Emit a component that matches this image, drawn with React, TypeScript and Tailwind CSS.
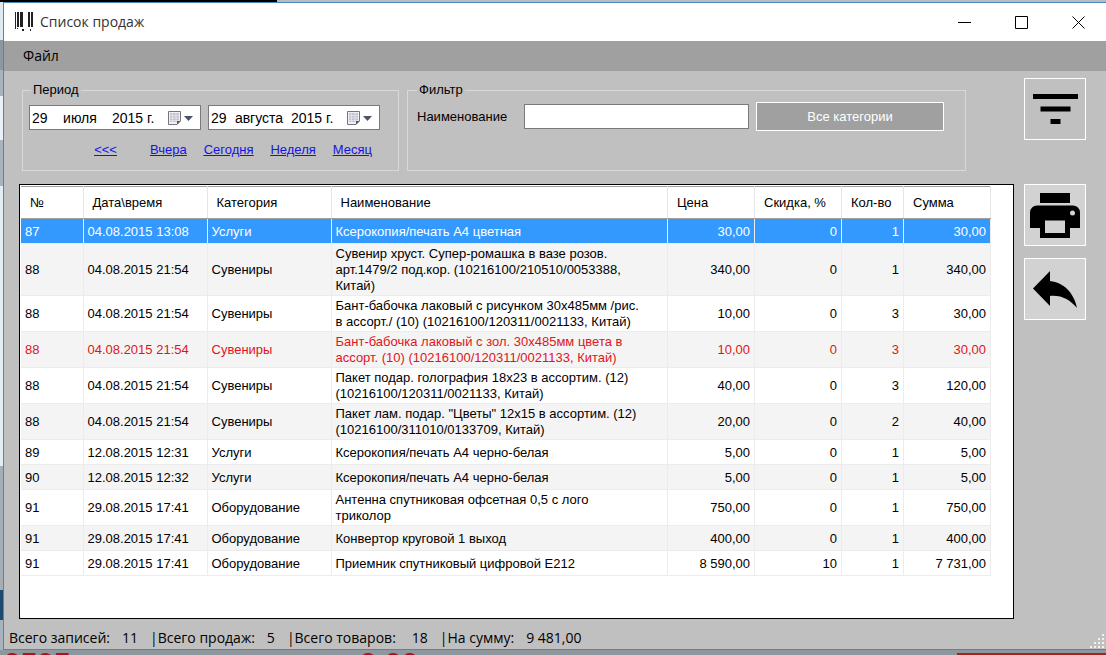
import { ReactNode } from "react";
import clsx from "clsx";

type Sale = {
  id: number;
  date: string;
  category: string;
  name: string;
  price: string;
  discount: number;
  count: number;
  total: string;
  state?: "selected" | "returned";
};

const sales: Sale[] = [
  { id: 87, date: "04.08.2015 13:08", category: "Услуги", name: "Ксерокопия/печать А4 цветная", price: "30,00", discount: 0, count: 1, total: "30,00", state: "selected" },
  { id: 88, date: "04.08.2015 21:54", category: "Сувениры", name: "Сувенир хруст. Супер-ромашка в вазе розов.\nарт.1479/2 под.кор. (10216100/210510/0053388,\nКитай)", price: "340,00", discount: 0, count: 1, total: "340,00" },
  { id: 88, date: "04.08.2015 21:54", category: "Сувениры", name: "Бант-бабочка лаковый с рисунком 30х485мм /рис.\nв ассорт./ (10) (10216100/120311/0021133, Китай)", price: "10,00", discount: 0, count: 3, total: "30,00" },
  { id: 88, date: "04.08.2015 21:54", category: "Сувениры", name: "Бант-бабочка лаковый с зол. 30х485мм цвета в\nассорт. (10) (10216100/120311/0021133, Китай)", price: "10,00", discount: 0, count: 3, total: "30,00", state: "returned" },
  { id: 88, date: "04.08.2015 21:54", category: "Сувениры", name: "Пакет подар. голография 18х23 в ассортим. (12)\n(10216100/120311/0021133, Китай)", price: "40,00", discount: 0, count: 3, total: "120,00" },
  { id: 88, date: "04.08.2015 21:54", category: "Сувениры", name: "Пакет лам. подар. \"Цветы\" 12х15 в ассортим. (12)\n(10216100/311010/0133709, Китай)", price: "20,00", discount: 0, count: 2, total: "40,00" },
  { id: 89, date: "12.08.2015 12:31", category: "Услуги", name: "Ксерокопия/печать А4 черно-белая", price: "5,00", discount: 0, count: 1, total: "5,00" },
  { id: 90, date: "12.08.2015 12:32", category: "Услуги", name: "Ксерокопия/печать А4 черно-белая", price: "5,00", discount: 0, count: 1, total: "5,00" },
  { id: 91, date: "29.08.2015 17:41", category: "Оборудование", name: "Антенна спутниковая офсетная 0,5 с лого\nтриколор", price: "750,00", discount: 0, count: 1, total: "750,00" },
  { id: 91, date: "29.08.2015 17:41", category: "Оборудование", name: "Конвертор круговой 1 выход", price: "400,00", discount: 0, count: 1, total: "400,00" },
  { id: 91, date: "29.08.2015 17:41", category: "Оборудование", name: "Приемник спутниковый цифровой Е212", price: "8 590,00", discount: 10, count: 1, total: "7 731,00" },
];

const columns = [
  { title: "№", width: "w-[62px]" },
  { title: "Дата\\время", width: "w-[124px]" },
  { title: "Категория", width: "w-[124px]" },
  { title: "Наименование", width: "" },
  { title: "Цена", width: "w-[87px]" },
  { title: "Скидка, %", width: "w-[87px]" },
  { title: "Кол-во", width: "w-[62px]" },
  { title: "Сумма", width: "w-[87px]" },
];

function BarcodeIcon() {
  return (
    <svg width="18" height="20" viewBox="0 0 18 20" fill="#222" shapeRendering="crispEdges" aria-hidden="true">
      <rect x="0" y="0" width="1" height="17" />
      <rect x="2" y="0" width="2" height="15" />
      <rect x="5" y="0" width="3" height="15" />
      <rect x="13" y="0" width="2" height="15" />
      <rect x="16" y="0" width="2" height="15" />
      <rect x="7" y="17" width="2" height="2" />
      <rect x="2" y="16" width="1" height="1" />
      <rect x="15" y="17" width="1" height="2" />
    </svg>
  );
}

function CalendarIcon() {
  return (
    <svg width="26" height="16" viewBox="0 0 26 16" aria-hidden="true">
      <path d="M1.5 1.5h12v9.500l-3.500 3.500h-8.500z" fill="#f1f1f4" stroke="#77747b" />
      <path d="M3 3h9v9H3z" fill="#c3c3d2" />
      <path d="M3 5.500h9M3 8h9M3 10.500h9M5.500 3v9M9 3v9" stroke="#e9e9ef" strokeWidth="0.7" />
      <path d="M10 14.500v-3.500h3.500z" fill="#555" />
      <path d="M17 6h9l-4.500 5z" fill="#4a5468" />
    </svg>
  );
}

function DateField({ label, day, month, year }: { label: string; day: string; month: string; year: string }) {
  return (
    <button
      aria-label={label}
      className="flex h-[25px] w-[172px] items-center border border-[#7a7a7a] bg-white pl-[2px] pr-[7px] text-left text-sm">
      <span className="w-4">{day}</span>
      <span className="flex-1 text-center">{month}</span>
      <span className="w-[55px] whitespace-nowrap">{year}</span>
      <CalendarIcon />
    </button>
  );
}

function SideButton({ label, className, children }: { label: string; className?: string; children: ReactNode }) {
  return (
    <button
      aria-label={label}
      className={clsx("flex size-[62px] items-center justify-center border border-white", className)}>
      {children}
    </button>
  );
}

function TitleBar() {
  return (
    <header className="flex h-[38px] items-center bg-white pl-[11px] pr-[21px]">
      <BarcodeIcon />
      <h1 className="ml-[7px] flex-1 font-['Open_Sans','Noto_Sans',sans-serif] text-sm text-[#333]">Список продаж</h1>
      <div className="flex gap-[44px]">
        <button aria-label="Свернуть">
          <svg width="13" height="13" viewBox="0 0 13 13" stroke="#000"><path d="M0 6.500h13" /></svg>
        </button>
        <button aria-label="Развернуть">
          <svg width="13" height="13" viewBox="0 0 13 13" stroke="#000" fill="none"><path d="M.5.5h12v12H.5z" /></svg>
        </button>
        <button aria-label="Закрыть">
          <svg width="13" height="13" viewBox="0 0 13 13" stroke="#000"><path d="M.5.5l12 12M12.500.5l-12 12" /></svg>
        </button>
      </div>
    </header>
  );
}

function SalesTable() {
  return (
    <div className="min-w-0 flex-1 border border-black bg-white pl-px pr-[22px] pt-px">
      <table className="w-full table-fixed border-collapse leading-4">
        <colgroup>
          {columns.map((column) => (
            <col key={column.title} className={column.width} />
          ))}
        </colgroup>
        <thead>
          <tr className="h-8">
            {columns.map((column) => (
              <th
                key={column.title}
                className="whitespace-nowrap border-r border-t border-b border-[#e5e5e5] border-t-[#a0a0a0] border-b-[#a0a0a0] pl-[9px] text-left font-normal">
                {column.title}
              </th>
            ))}
          </tr>
        </thead>
        <tbody>
          {sales.map((sale, i) => (
            <tr
              key={i}
              className={clsx(
                "h-[25px] [&>td]:border-r [&>td]:border-b [&>td]:border-[#ececec] [&>td]:px-1 [&>td]:pt-[2px] [&>td]:pb-px",
                sale.state === "selected" ? "bg-[#3399ff] text-white" : i % 2 ? "bg-[#f4f4f4]" : "bg-white",
                sale.state === "returned" && "text-[#e0141c]"
              )}>
              <td>{sale.id}</td>
              <td className="whitespace-nowrap">{sale.date}</td>
              <td>{sale.category}</td>
              <td className="whitespace-pre-line">{sale.name}</td>
              <td className="text-right">{sale.price}</td>
              <td className="text-right">{sale.discount}</td>
              <td className="text-right">{sale.count}</td>
              <td className="text-right">{sale.total}</td>
            </tr>
          ))}
        </tbody>
      </table>
    </div>
  );
}

export default function App() {
  return (
    <div className="flex min-h-screen flex-col bg-[#8e979e] font-['Liberation_Sans',sans-serif] text-[13px] text-black">
      {/* Strip of the desktop above the window */}
      <div className="flex h-[2px] bg-[#b4bcc8]">
        <div className="w-1/4 bg-black" />
      </div>

      <div className="flex flex-1">
        {/* Edge of the window behind */}
        <div className="flex w-[3px] flex-col">
          <div className="h-[38px] bg-[#dfe9f0]" />
          <div className="h-[30px] bg-[#8d979f]" />
          <div className="h-[26px] bg-[#a9b3bd]" />
          <div className="h-[44px] bg-[#e9f2f8]" />
          <div className="h-[46px] bg-[#a9b3bd]" />
          <div className="h-[280px] bg-[#e3edf4]" />
          <div className="flex-1 bg-[#a4afb8]" />
          <div className="h-[30px] bg-[#1f4a70]" />
          <div className="h-[30px] bg-[#a9b3bd]" />
        </div>
        <main className="flex min-w-0 flex-1 flex-col border-y border-l border-[#4a88b8] bg-[#c0c0c0]">
          <TitleBar />
          <nav className="flex h-[30px] items-center bg-[#a0a0a0] pl-[19px]">
            <button className="font-['Open_Sans','Noto_Sans',sans-serif] text-sm">Файл</button>
          </nav>

          <div className="flex flex-1 gap-[10px] pl-[15px] pr-5 pt-[7px]">
            <div className="flex min-w-0 flex-1 flex-col">
              <div className="flex gap-[8px] pl-[3px] pr-[48px]">
                <fieldset className="h-[93px] w-[377px] shrink-0 border border-[#d8d8d8] px-[6px]">
                  <legend className="ml-[2px] px-[2px] leading-[24px]">Период</legend>
                  <div className="flex gap-[7px] pt-[3px]">
                    <DateField label="Начало периода" day="29" month="июля" year="2015 г." />
                    <DateField label="Конец периода" day="29" month="августа" year="2015 г." />
                  </div>
                  <div className="flex justify-end gap-[17px] pr-[20px] pt-[10px] text-[#1515e0] underline">
                    <a href="#back" className="mr-4">&lt;&lt;&lt;</a>
                    <a href="#yesterday">Вчера</a>
                    <a href="#today">Сегодня</a>
                    <a href="#week">Неделя</a>
                    <a href="#month">Месяц</a>
                  </div>
                </fieldset>
                <fieldset className="h-[93px] min-w-0 flex-1 border border-[#d8d8d8] pl-[9px] pr-[21px]">
                  <legend className="px-[2px] leading-[24px]">Фильтр</legend>
                  <div className="flex items-center">
                    <label htmlFor="name" className="w-[107px]">Наименование</label>
                    <input id="name" className="h-[25px] min-w-0 flex-1 border border-[#7a7a7a] bg-white px-1" />
                    <button className="ml-[7px] h-[29px] w-[188px] border border-white bg-[#a0a0a0] text-white">
                      Все категории
                    </button>
                  </div>
                </fieldset>
              </div>
              <div className="mt-[13px] flex flex-1">
                <SalesTable />
              </div>
            </div>

            <aside className="flex flex-col">
              <SideButton label="Фильтр" className="mb-[44px]">
                <svg width="45" height="30" viewBox="0 0 45 30"><path d="M0 0h45v5H0zM7.500 12.500h30v5H7.500zM17.500 25h10v5h-10z" /></svg>
              </SideButton>
              <SideButton label="Печать" className="mb-3 bg-[#d2d2d2]">
                <svg width="50" height="45" viewBox="0 0 50 45">
                  <path d="M10 0h30v10H10zM7 12.500h36a7 7 0 0 1 7 7V35H40v10H10V35H0V19.500a7 7 0 0 1 7-7zM15 27.500V40h20V27.500z" fillRule="evenodd" />
                  <circle cx="42.500" cy="20" r="2.500" fill="#d2d2d2" />
                </svg>
              </SideButton>
              <SideButton label="Возврат" className="bg-[#d2d2d2]">
                <svg width="44" height="37" viewBox="0 0 44 37"><path d="M17 0L0 17.500L17 35V25C29 24 37 29 44 37C41 22 31 11.500 17 10z" /></svg>
              </SideButton>
            </aside>
          </div>

          <footer className="flex h-[30px] items-end justify-between pl-[5px] font-['Open_Sans','Noto_Sans',sans-serif] text-sm">
            <div className="flex gap-3 pb-px whitespace-nowrap">
              <span>Всего записей:</span>
              <span>11</span>
              <span>|Всего продаж:</span>
              <span>5</span>
              <span>|Всего товаров:</span>
              <span className="ml-1">18</span>
              <span>|На сумму:</span>
              <span>9 481,00</span>
            </div>
            <svg width="16" height="16" viewBox="0 0 16 16" fill="#f2f2f2" aria-hidden="true">
              <path d="M12 1h2v2h-2zM8 5h2v2H8zM12 5h2v2h-2zM4 9h2v2H4zM8 9h2v2H8zM12 9h2v2h-2zM0 13h2v2H0zM4 13h2v2H4zM8 13h2v2H8zM12 13h2v2h-2z" />
            </svg>
          </footer>
        </main>
      </div>

      {/* Strip of the desktop below the window */}
      <div className="flex h-[5px] justify-between overflow-hidden text-[#b01020]">
        <div className="flex text-3xl leading-[26px] font-bold">
          <span className="w-[360px] pl-1">0505</span>
          <span>0,00</span>
        </div>
        <div className="mt-[3px] w-[149px] bg-[#a82020]" />
      </div>
    </div>
  );
}
